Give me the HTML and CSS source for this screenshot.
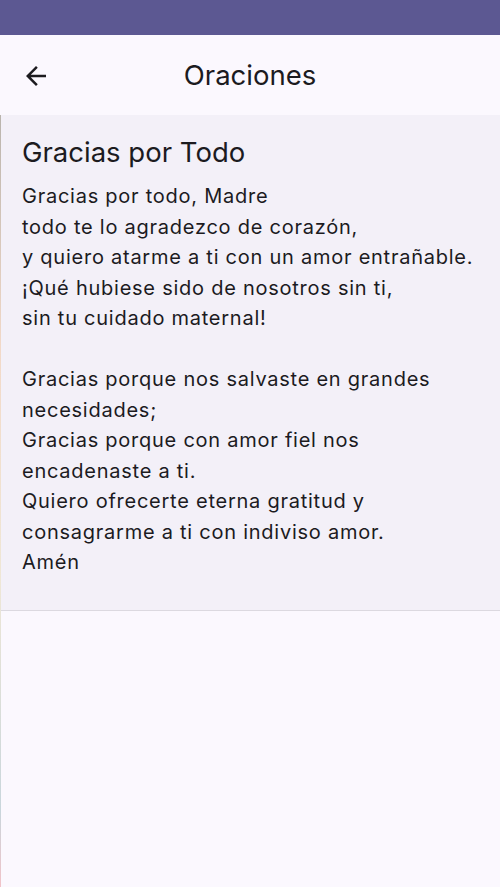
FILE: index.html
```html
<!DOCTYPE html>
<html lang="es">
<head>
<meta charset="UTF-8">
<meta name="viewport" content="width=device-width, initial-scale=1.0">
<title>Oraciones</title>
<link rel="stylesheet" href="styles.css">
</head>
<body>
<div class="status-bar"></div>
<header class="app-bar">
  <button class="back-btn" aria-label="Volver">
    <svg viewBox="0 0 24 24" width="30" height="30"><path d="M20 11H7.83l5.59-5.59L12 4l-8 8 8 8 1.41-1.41L7.83 13H20v-2z"/></svg>
  </button>
  <h1 class="app-title">Oraciones</h1>
</header>
<main class="content">
  <section class="prayer-card">
    <h2 class="prayer-title">Gracias por Todo</h2>
    <p class="prayer-text">Gracias por todo, Madre<br>
todo te lo agradezco de corazón,<br>
y quiero atarme a ti con un amor entrañable.<br>
¡Qué hubiese sido de nosotros sin ti,<br>
sin tu cuidado maternal!<br>
<br>
Gracias porque nos salvaste en grandes<br>
necesidades;<br>
Gracias porque con amor fiel nos<br>
encadenaste a ti.<br>
Quiero ofrecerte eterna gratitud y<br>
consagrarme a ti con indiviso amor.<br>
Amén</p>
  </section>
</main>
</body>
</html>
```

FILE: styles.css
```css
body {
  margin: 0;
  font-family: 'Inter', 'Roboto', sans-serif;
  background-color: #fbf8fe;
  color: #1c1b1f;
  width: 500px;
  height: 887px;
  overflow: hidden;
  display: flex;
  flex-direction: column;
}

.status-bar {
  height: 35px;
  background-color: #5c5892;
}

.app-bar {
  height: 80px;
  display: flex;
  align-items: center;
  justify-content: center;
  position: relative;
  background-color: #fbf8fe;
}

.back-btn {
  position: absolute;
  left: 21px;
  top: 26px;
  width: 30px;
  height: 30px;
  padding: 0;
  border: none;
  background: none;
}

.back-btn svg {
  display: block;
  fill: #1c1b1f;
}

.app-title {
  margin: 0;
  font-size: 27.5px;
  font-weight: 400;
  line-height: 35px;
}

.content {
  flex: 1;
  border-left: 1px solid;
  border-image: linear-gradient(#b9b4ad, #f2d9c8 30%, #efe7d6 60%, #c9d6dc 90%, #f2c3c8 100%, #f4c9cc) 1;
  background-color: #fbf8fe;
}

.prayer-card {
  background-color: #f3f0f8;
  border-bottom: 1px solid #dcd9e0;
  padding: 20px 20px 32px 21px;
}

.prayer-title {
  margin: 0 0 11px;
  font-size: 27.5px;
  font-weight: 400;
  line-height: 35px;
}

.prayer-text {
  margin: 0;
  font-size: 20px;
  line-height: 30.5px;
  letter-spacing: 0.75px;
  white-space: nowrap;
}
```
